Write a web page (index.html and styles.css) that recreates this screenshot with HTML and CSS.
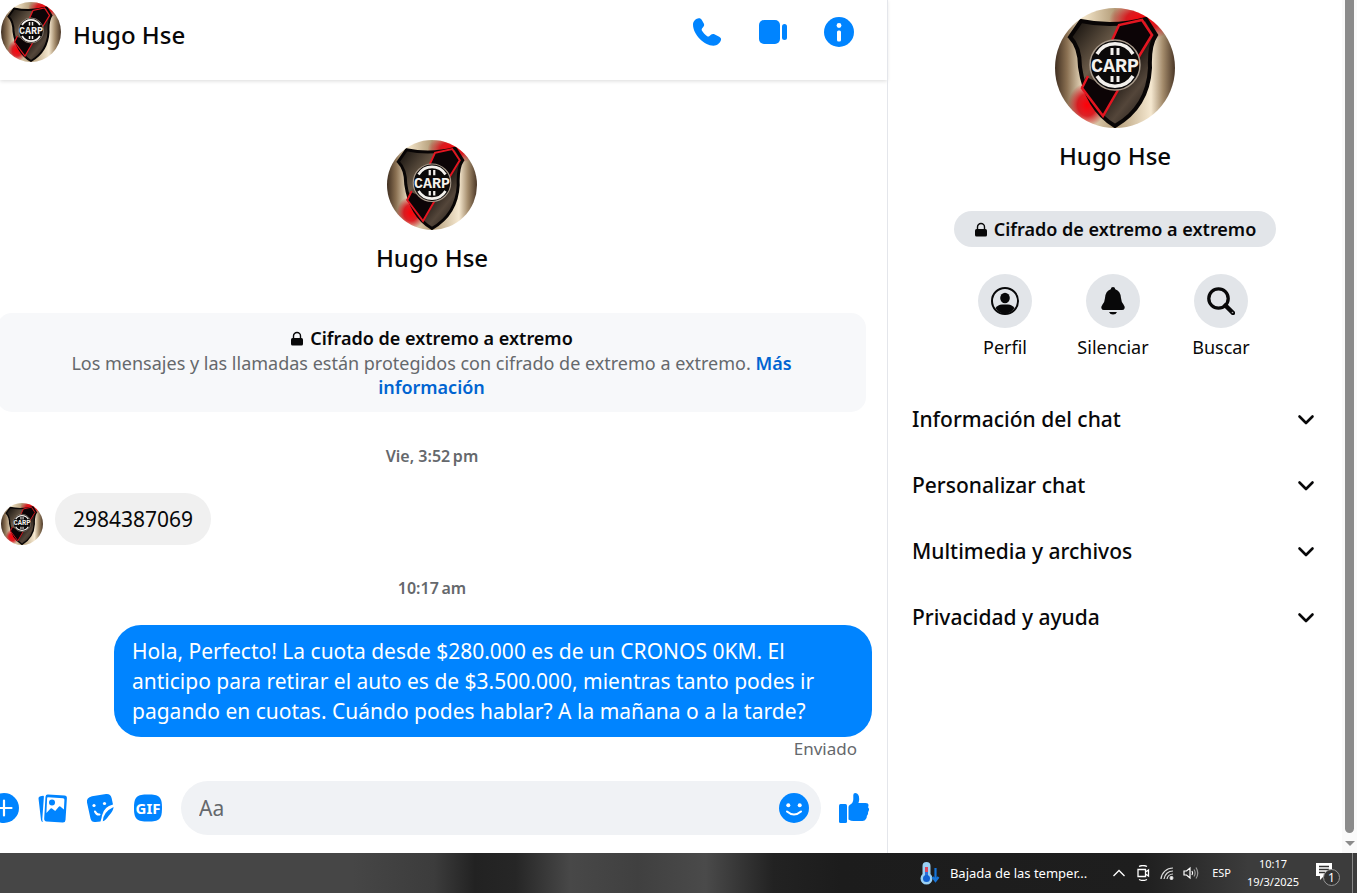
FILE: index.html
```html
<!DOCTYPE html>
<html lang="es">
<head>
    <meta charset="UTF-8">
    <title>Hugo Hse</title>
    <meta name="viewport" content="width=device-width,initial-scale=1"/>
    <link rel="stylesheet" href="styles.css">
</head>
<body>
<!-- shared drawings -->
<svg class="sprite" aria-hidden="true">
    <defs>
        <linearGradient id="gold" x1="0" y1="0" x2="1" y2="0">
            <stop offset="0" stop-color="#3f2e20"/>
            <stop offset=".1" stop-color="#8a7052"/>
            <stop offset=".24" stop-color="#f2e4c8"/>
            <stop offset=".5" stop-color="#b39c78"/>
            <stop offset=".8" stop-color="#f5e8d0"/>
            <stop offset=".9" stop-color="#a38b6b"/>
            <stop offset="1" stop-color="#4a3626"/>
        </linearGradient>
        <radialGradient id="redGlow">
            <stop offset="0" stop-color="#ff0008"/>
            <stop offset=".5" stop-color="#d9000b" stop-opacity=".85"/>
            <stop offset="1" stop-color="#c0000b" stop-opacity="0"/>
        </radialGradient>
        <linearGradient id="dark" x1="0" y1="0" x2="1" y2="1">
            <stop offset="0" stop-color="#0b0806"/>
            <stop offset=".35" stop-color="#6b5b49"/>
            <stop offset=".55" stop-color="#1f1813"/>
            <stop offset=".72" stop-color="#54463a"/>
            <stop offset="1" stop-color="#080606"/>
        </linearGradient>
        <clipPath id="round"><circle cx="60" cy="60" r="60"/></clipPath>
    </defs>
    <symbol id="crest" viewBox="0 0 120 120">
        <g clip-path="url(#round)">
            <rect width="120" height="120" fill="url(#gold)"/>
            <ellipse cx="88" cy="12" rx="34" ry="20" fill="url(#redGlow)"/>
            <ellipse cx="32" cy="97" rx="19" ry="22" fill="url(#redGlow)"/>
            <path d="M26 13Q59 20 91 11L101 27Q94 37 95 60Q93 99 60 118Q31 101 25 59Q25 39 15 29Z" fill="url(#dark)" stroke="#080505" stroke-width="4"/>
            <path d="M64 17L87 12L97 27L82 50L50 50ZM31 69L26 80L48 108L63 83Z" fill="#0c0406"/>
            <path d="M54 39L64 17L87 12L97 27L83 50M33 68L27 80L48 108L63 82" fill="none" stroke="#e31520" stroke-width="2.500"/>
            <circle cx="60" cy="57" r="25" fill="#0b0909" stroke="#a89a8b" stroke-width="1.500"/>
            <path d="M42 46A21 21 0 0 1 78 46M42 68A21 21 0 0 0 78 68" fill="none" stroke="#f4f1ed" stroke-width="3.500"/>
            <path d="M57 40V47M63 40V47M57 68V74M63 68V74" stroke="#f4f1ed" stroke-width="3"/>
            <text class="crest-text" x="60" y="64">CARP</text>
        </g>
    </symbol>
    <symbol id="lock" viewBox="0 0 14 16">
        <path d="M3.500 8V6a3.500 3.500 0 0 1 7 0v2" fill="none" stroke="currentColor" stroke-width="1.400"/>
        <rect x="1" y="8" width="12" height="7.500" rx="1.500" fill="currentColor"/>
    </symbol>
    <symbol id="chevron" viewBox="0 0 20 20">
        <path d="M3.500 7.500L10 14L16.500 7.500" fill="none" stroke="currentColor" stroke-width="2.600" stroke-linecap="round" stroke-linejoin="round"/>
    </symbol>
</svg>

<main class="app">
    <section class="chat">
        <header class="chat-head">
            <svg class="avatar avatar-60" role="img" aria-label="Hugo Hse"><use href="#crest"/></svg>
            <h1 class="name">Hugo Hse</h1>
            <div class="calls">
                <button type="button" aria-label="Llamar">
                    <svg viewBox="0 0 30 30"><path d="M1 7.500C1 3.500 4.500 1.500 6.700 1.200C8 1 9 1.600 9.700 2.800L11.800 6.600C12.400 7.800 12.200 8.800 11.400 9.800L10 11.500C9.500 12.300 9.500 13 10 13.800C11.400 16 13 17.700 15.200 19.200C16 19.700 16.700 19.600 17.500 19L19.200 17.600C20.200 16.800 21.300 16.700 22.400 17.300L27.200 19.700C28.700 20.500 29.400 21.500 29 23C28.200 26 25 28.700 21.500 28.700C12 28.500 1 17.500 1 7.500Z"/></svg>
                </button>
                <button type="button" aria-label="Videollamada">
                    <svg viewBox="0 0 30 30"><rect x="1" y="3" width="21" height="24" rx="5"/><rect x="24" y="7" width="5" height="16" rx="2.500"/></svg>
                </button>
                <button type="button" aria-label="Información de la conversación">
                    <svg viewBox="0 0 30 30"><circle cx="15" cy="15" r="15"/><circle cx="15" cy="8.500" r="2.400" fill="#fff"/><rect x="13" y="13.500" width="4" height="11" rx="1.500" fill="#fff"/></svg>
                </button>
            </div>
        </header>

        <div class="messages">
            <div class="intro">
                <svg class="avatar avatar-90" role="img" aria-label="Hugo Hse"><use href="#crest"/></svg>
                <h2 class="name">Hugo Hse</h2>
            </div>
            <div class="notice">
                <p class="notice-title"><svg class="lock"><use href="#lock"/></svg>Cifrado de extremo a extremo</p>
                <p>Los mensajes y las llamadas están protegidos con cifrado de extremo a extremo. <a href="#">Más información</a></p>
            </div>
            <p class="time">Vie, 3:52&#8201;pm</p>
            <div class="row-in">
                <svg class="avatar avatar-42" role="img" aria-label="Hugo Hse"><use href="#crest"/></svg>
                <p class="bubble bubble-in">2984387069</p>
            </div>
            <p class="time">10:17&#8201;am</p>
            <div class="row-out">
                <p class="bubble bubble-out">Hola, Perfecto! La cuota desde $280.000 es de un CRONOS 0KM. El anticipo para retirar el auto es de $3.500.000, mientras tanto podes ir pagando en cuotas. Cuándo podes hablar? A la mañana o a la tarde?</p>
            </div>
            <p class="sent">Enviado</p>
        </div>

        <form class="composer">
            <button type="button" aria-label="Más acciones">
                <svg viewBox="0 0 30 30"><circle cx="15" cy="15" r="15"/><path d="M15 7.500V22.500M7.500 15H22.500" fill="none" stroke="#fff" stroke-width="2.200" stroke-linecap="round"/></svg>
            </button>
            <button type="button" aria-label="Adjuntar foto">
                <svg viewBox="0 0 30 30">
                    <path d="M1.500 5.500Q1.300 3.500 3.500 3.200L6 2.800Q7 2.700 6.900 3.800L5.300 26Q5.200 28.500 6.200 29Q4.300 29 4 27Z"/>
                    <path d="M11 1.500L27.500 2.600Q30 2.800 29.900 5.300L28.500 27Q28.300 29.700 25.600 29.500L9.500 28.400Q7 28.200 7.200 25.500L8.500 3.800Q8.700 1.300 11 1.500Z"/>
                    <path d="M11 4.300L26 5.300Q27.500 5.400 27.400 6.800L26.900 16.500L23.300 13.500Q22.500 13 21.800 13.700L18.200 18L15 15.500Q14.300 15 13.600 15.600L9.400 20L10.100 5.200Q10.200 4.200 11 4.300Z" fill="#fff"/>
                    <circle cx="15" cy="9.500" r="3"/>
                </svg>
            </button>
            <button type="button" aria-label="Elegir un sticker">
                <svg viewBox="0 0 30 30">
                    <path d="M7 3.200L21 1.100Q25.500 .6 26.600 5L28 11.500Q19 13.500 17 22.500Q16.700 25 15.500 28.500L10.500 29Q6.500 29.500 5.500 25.500L2 9.500Q1.200 4.500 7 3.200Z"/>
                    <path d="M28.600 14Q28.300 18 24 22.500Q20.500 27.500 17.800 28.300Q18 19 28.600 14Z"/>
                    <circle cx="9" cy="12.500" r="1.600" fill="#fff"/><circle cx="19.500" cy="10.500" r="1.600" fill="#fff"/>
                    <path d="M10 18.500Q11.500 22 14.500 21.500" fill="none" stroke="#fff" stroke-width="2" stroke-linecap="round"/>
                </svg>
            </button>
            <button type="button" aria-label="Elegir un GIF">
                <svg viewBox="0 0 30 30"><path d="M15 1.500C26 1.500 29 3.500 29 15C29 26.500 26 28.500 15 28.500C4 28.500 1 26.500 1 15C1 3.500 4 1.500 15 1.500Z"/><text class="gif" x="15" y="20.500">GIF</text></svg>
            </button>
            <div class="field">
                <input type="text" placeholder="Aa" aria-label="Mensaje">
                <button type="button" aria-label="Elegir un emoji">
                    <svg viewBox="0 0 30 30"><circle cx="15" cy="15" r="15"/><circle cx="9.300" cy="12.300" r="2" fill="#fff"/><circle cx="20.700" cy="12.300" r="2" fill="#fff"/><path d="M8 18.500Q15 24.500 22 18.500" fill="none" stroke="#fff" stroke-width="2" stroke-linecap="round"/></svg>
                </button>
            </div>
            <button type="button" aria-label="Enviar Me gusta">
                <svg viewBox="0 0 30 30"><rect y="11" width="8" height="19" rx="1.500"/><path d="M9.500 14Q9.500 12.500 11 11.800Q14.500 9.800 14.300 5.500V2Q14.300 0 16.300 0Q20.200 .5 20.200 6Q20.200 8.500 19.400 10H26.500Q29.500 10 29.500 12.300Q29.500 13.500 29 14.200Q30.500 15.500 29.800 17.500Q29.500 18.500 29 19Q29.500 21.500 27.800 23Q28 25 26.700 26.200Q26 28 23.500 28H14.500Q12 28 9.500 26.500Z"/></svg>
            </button>
        </form>
    </section>

    <aside class="details">
        <svg class="avatar avatar-120" role="img" aria-label="Hugo Hse"><use href="#crest"/></svg>
        <h2 class="name">Hugo Hse</h2>
        <button type="button" class="pill"><svg class="lock"><use href="#lock"/></svg>Cifrado de extremo a extremo</button>
        <div class="actions">
            <button type="button">
                <span class="disc"><svg viewBox="0 0 28 28"><circle cx="14" cy="14" r="13" fill="none" stroke="currentColor" stroke-width="2"/><ellipse cx="14" cy="11" rx="4.800" ry="5.300"/><path d="M4.500 21Q7 17.500 11 17.500H17Q21 17.500 23.500 21Q20 26.500 14 26.500Q8 26.500 4.500 21Z"/></svg></span>
                Perfil
            </button>
            <button type="button">
                <span class="disc"><svg viewBox="0 0 28 28"><path d="M14 0Q16 0 16.300 2.300Q21.500 4 22 11Q22.300 15 24.500 17.500Q26 19.500 25.500 21.500Q25 23 23 23H5Q3 23 2.500 21.500Q2 19.500 3.500 17.500Q5.700 15 6 11Q6.500 4 11.700 2.300Q12 0 14 0Z"/><path d="M10 25H18Q17 27.500 14 27.500Q11 27.500 10 25Z"/></svg></span>
                Silenciar
            </button>
            <button type="button">
                <span class="disc"><svg viewBox="0 0 28 28"><circle cx="11.500" cy="11.500" r="9.700" fill="none" stroke="currentColor" stroke-width="3.300"/><path d="M18.500 18.500L26 26" stroke="currentColor" stroke-width="4.500" stroke-linecap="round"/><circle cx="25.500" cy="25.500" r=".8" fill="#aaa"/></svg></span>
                Buscar
            </button>
        </div>
        <nav class="sections">
            <button type="button">Información del chat<svg><use href="#chevron"/></svg></button>
            <button type="button">Personalizar chat<svg><use href="#chevron"/></svg></button>
            <button type="button">Multimedia y archivos<svg><use href="#chevron"/></svg></button>
            <button type="button">Privacidad y ayuda<svg><use href="#chevron"/></svg></button>
        </nav>
    </aside>

    <div class="scrollbar" aria-hidden="true">
        <span class="thumb"></span>
        <span class="arrow"></span>
    </div>
</main>

<footer class="taskbar">
    <button type="button" class="weather">
        <svg viewBox="0 0 20 24">
            <path d="M2.500 5A4 4 0 0 1 10.500 5V13A6 6 0 1 1 2.500 13Z" fill="#9bd0f3"/>
            <path d="M6.500 6V17" stroke="#e2455c" stroke-width="3"/>
            <path d="M6.500 11V17" stroke="#2f6fd8" stroke-width="3"/>
            <circle cx="6.500" cy="17.500" r="3.500" fill="#1361d1"/>
            <path d="M15.500 7V19M12.500 16L15.500 20L18.500 16" fill="none" stroke="#1674d8" stroke-width="2.200"/>
        </svg>
        Bajada de las temper...
    </button>
    <div class="tray">
        <button type="button" aria-label="Mostrar iconos ocultos"><svg viewBox="0 0 16 16"><path d="M2.500 11L8 5.500L13.500 11" fill="none" stroke="#fff" stroke-width="1.300"/></svg></button>
        <button type="button" aria-label="Reunirse ahora"><svg viewBox="0 0 16 16"><path d="M4 1.500Q8 -.5 12 1.500M4 14.500Q8 16.500 12 14.500M3 4.500H10.500V11.500H3ZM10.500 7L13.500 5V11L10.500 9" fill="none" stroke="#fff" stroke-width="1.300"/></svg></button>
        <button type="button" aria-label="Red"><svg viewBox="0 0 16 16" fill="none" stroke="#ddd" stroke-width="1.200"><path d="M2 14A12 12 0 0 1 14 3M5 14A9 9 0 0 1 14 6M8 14A6 6 0 0 1 14 9"/><circle cx="12.500" cy="13" r="1.400" fill="#fff"/></svg></button>
        <button type="button" aria-label="Volumen"><svg viewBox="0 0 16 16" fill="none" stroke="#fff" stroke-width="1.200"><path d="M1 6H3.500L7 3V13L3.500 10H1ZM9 6Q10.300 8 9 10"/><path d="M11 4.500Q13.300 8 11 11.500M13 2.500Q16.500 8 13 13.500" stroke="#999"/></svg></button>
    </div>
    <button type="button" class="lang">ESP</button>
    <time class="clock" datetime="2025-03-19T10:17"><span>10:17</span><span>19/3/2025</span></time>
    <button type="button" class="alerts" aria-label="1 notificación">
        <svg viewBox="0 0 26 26"><path d="M1 3H17V16H9L5 20V16H1Z" fill="#fff"/><path d="M4 6.500H14M4 9.500H14M4 12.500H10" stroke="#333" stroke-width="1.300"/><circle cx="16.500" cy="17.500" r="8" fill="#333" stroke="#999"/><text x="16.500" y="22">1</text></svg>
    </button>
    <span class="desktop-edge"></span>
</footer>
</body>
</html>
```
FILE: styles.css
```css
body,h1,h2,p{margin: 0;padding: 0;}
*{box-sizing: border-box;}
a{text-decoration: none;}
svg{display: block;flex: none;}
button,input{font: inherit;color: inherit;border: none;background: none;padding: 0;}
button{cursor: pointer;}
body{ display: flex; flex-direction: column; height: 100vh; overflow: hidden; background: #fff; color: #080809; font-family: "Noto Sans","Open Sans",sans-serif; font-size: 18px; line-height: 24px; }
.sprite{ position: absolute; width: 0; height: 0; }
.crest-text{ font-family: "Liberation Mono",monospace; font-size: 20px; font-weight: bold; fill: #f4f1ed; text-anchor: middle; }
.app{ display: flex; flex: 1; min-height: 0; }
.name{ font-size: 24px; line-height: 32px; font-weight: 500; }
.avatar-42{ width: 42px; height: 42px; }
.avatar-60{ width: 60px; height: 60px; }
.avatar-90{ width: 90px; height: 90px; }
.avatar-120{ width: 120px; height: 120px; }
.lock{ width: 14px; height: 16px; }

/* conversation */
.chat{ display: flex; flex-direction: column; flex: 1; min-width: 0; }
.chat-head{ display: flex; align-items: flex-start; height: 80px; padding: 2px 33px 0 1px; box-shadow: 0 1px 4px rgba(0,0,0,.15); }
.chat-head .name{ margin: 17px 0 0 12px; }
.calls{ display: flex; gap: 36px; margin: 15px 0 0 auto; }
.calls svg,.composer svg{ width: 30px; height: 30px; fill: #0084ff; }
.messages{ display: flex; flex-direction: column; flex: 1; min-height: 0; padding: 60px 15px 0 0; }
.intro{ display: flex; flex-direction: column; align-items: center; gap: 12px; padding-right: 8px; }
.notice{ margin: 39px 6px 1px -3px; padding: 12px 60px 13px; border-radius: 15px; background: #f7f8fa; color: #65686c; text-align: center; }
.notice-title{ display: flex; align-items: center; justify-content: center; gap: 6px; height: 26px; color: #080809; font-weight: 600; }
.notice a{ color: #0064d1; font-weight: 600; }
.time{ margin: 31px 8px 25px 0; text-align: center; color: #65686c; font-size: 16px; font-weight: 600; }
.row-in{ display: flex; align-items: flex-end; gap: 12px; padding-left: 1px; }
.row-out{ display: flex; justify-content: flex-end; }
.bubble{ padding: 11px 18px; border-radius: 27px; font-size: 21px; line-height: 30px; }
.bubble-in{ background: #f0f0f0; }
.bubble-out{ max-width: 758px; background: #0084ff; color: #fff; }
.sent{ padding-right: 15px; text-align: right; color: #65686c; font-size: 17px; }
.composer{ display: flex; align-items: center; gap: 18px; padding: 18px 18px 18px 0; margin-left: -11px; }
.gif{ fill: #fff; font-size: 15px; font-weight: 700; text-anchor: middle; }
.field{ display: flex; align-items: center; flex: 1; height: 54px; padding: 0 12px 0 18px; border-radius: 27px; background: #f0f2f5; }
.field input{ flex: 1; min-width: 0; font-size: 21px; outline: none; }
.field input::placeholder{ color: #65686c; opacity: 1; }

/* details */
.details{ display: flex; flex-direction: column; align-items: center; width: 455px; padding-top: 8px; border-left: 1px solid #e4e6eb; }
.details .name{ margin-top: 12px; }
.pill{ display: flex; align-items: center; gap: 6px; height: 36px; margin-top: 39px; padding: 0 20px; border-radius: 18px; background: #e2e5e9; font-weight: 600; }
.actions{ display: flex; margin-top: 27px; padding-right: 4px; }
.actions button{ display: flex; flex-direction: column; align-items: center; gap: 7px; width: 108px; }
.disc{ display: flex; align-items: center; justify-content: center; width: 54px; height: 54px; border-radius: 50%; background: #e2e5e9; }
.disc svg{ width: 28px; height: 28px; fill: currentColor; }
.sections{ align-self: stretch; margin-top: 27px; padding: 0 26px 0 24px; }
.sections button{ display: flex; align-items: center; justify-content: space-between; width: 100%; height: 66px; font-size: 21px; font-weight: 500; }
.sections svg{ width: 20px; height: 20px; }
.scrollbar{ display: flex; flex-direction: column; align-items: center; width: 15px; padding-bottom: 7px; background: #fafafa; }
.thumb{ flex: 1; width: 9px; border-radius: 0 0 5px 5px; background: #8b8b8b; }
.arrow{ margin-top: 8px; border: 5px solid transparent; border-top-color: #8b8b8b; border-bottom: none; }

/* taskbar */
.taskbar{ display: flex; align-items: center; justify-content: flex-end; height: 40px; color: #fff; font-size: 13px; line-height: 18px; background: linear-gradient(90deg,#464646 0,#464646 26%,#3c3c3c 32%,#222 35%,#262626 38%,#484848 42%,#404040 47%,#4a4a4a 52%,#222 57%,#1c1c1c 62%,#1e1e1e 84%,#3c3c3c 92%,#3c3c3c 100%); }
.weather{ display: flex; align-items: center; gap: 10px; }
.weather svg{ width: 20px; height: 24px; }
.tray{ display: flex; gap: 8px; margin-left: 24px; }
.tray svg{ width: 16px; height: 16px; }
.lang{ margin-left: 13px; font-size: 11px; }
.clock{ display: flex; flex-direction: column; width: 84px; text-align: center; font-size: 11px; }
.alerts svg{ width: 26px; height: 26px; }
.alerts text{ fill: #fff; font-size: 12px; text-anchor: middle; }
.desktop-edge{ align-self: stretch; width: 1px; margin: 0 4px 0 11px; background: #888; }
```
